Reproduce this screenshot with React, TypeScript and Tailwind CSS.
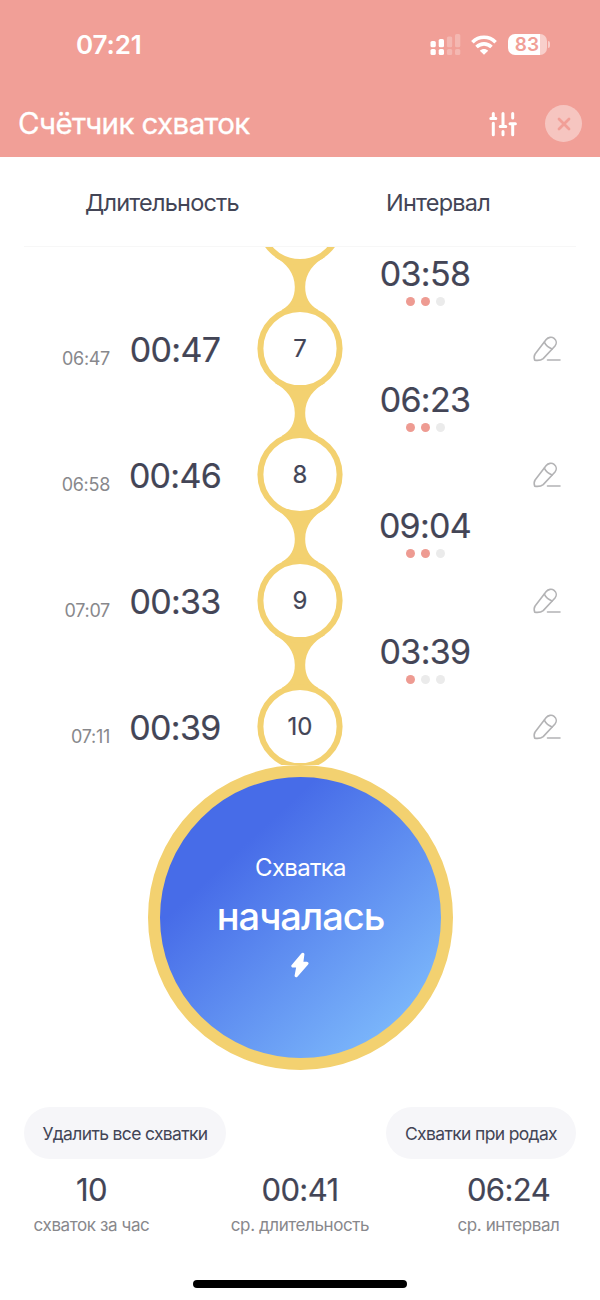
import React from 'react';

interface Contraction {
  number?: number;
  startedAt?: string;
  duration?: string;
  interval?: string;
  intensity?: number;
}

// The first entry is scrolled out of view, only its interval is still visible
const contractions: Contraction[] = [
  { interval: '03:58', intensity: 2 },
  { number: 7, startedAt: '06:47', duration: '00:47', interval: '06:23', intensity: 2 },
  { number: 8, startedAt: '06:58', duration: '00:46', interval: '09:04', intensity: 2 },
  { number: 9, startedAt: '07:07', duration: '00:33', interval: '03:39', intensity: 1 },
  { number: 10, startedAt: '07:11', duration: '00:39' },
];

const SignalIcon = () => (
  <svg width="31" height="22" viewBox="0 0 31 22" fill="#fff">
    <rect x="0.5" y="7" width="5.3" height="6.3" rx="1.6" />
    <rect x="8.7" y="5" width="5.3" height="8.3" rx="1.6" />
    <rect x="0.5" y="15" width="5.3" height="6" rx="1.6" />
    <rect x="8.7" y="15" width="5.3" height="6" rx="1.6" />
    <g opacity="0.25">
      <rect x="16.9" y="2.5" width="5.3" height="10.8" rx="1.6" />
      <rect x="25" y="0" width="5.3" height="13.3" rx="1.6" />
      <rect x="16.9" y="15" width="5.3" height="6" rx="1.6" />
      <rect x="25" y="15" width="5.3" height="6" rx="1.6" />
    </g>
  </svg>
);

const WifiIcon = () => (
  <svg width="26" height="20" viewBox="0 0 26 20" fill="none" stroke="#fff" strokeWidth="3.6">
    <path d="M1.4 7.2C8 0.6 18 0.6 24.6 7.2" />
    <path d="M5.5 12C10 7.8 16 7.8 20.5 12" />
    <path d="M13 19.8L8.8 15.8C11.2 13.4 14.8 13.4 17.2 15.8Z" fill="#fff" stroke="none" />
  </svg>
);

const BatteryIcon = () => (
  <div className="flex items-center gap-px">
    <div className="flex h-[21px] w-[39px] items-center justify-center rounded-[7px] bg-linear-to-r from-white from-82% to-white/50 to-82% text-[19px] leading-none font-semibold text-[#f19f97]">
      <span className="-ml-px">83</span>
    </div>
    <div className="h-[7px] w-[2px] rounded-r-full bg-white/50" />
  </div>
);

const SlidersIcon = () => (
  <svg width="28" height="26" viewBox="0 0 28 26" fill="none" stroke="#fff" strokeWidth="3" strokeLinecap="round">
    <path d="M4.3 2.5V7M1.8 7.6H6.8M4.3 12.2V23.8" />
    <path d="M14 2.5V15M11.2 15.6H16.8M14 20.5V23.8" />
    <path d="M23.7 2.5V7M21 12.8H26.4M23.7 13V23.8" />
  </svg>
);

const PencilIcon = () => (
  <svg width="30" height="28" viewBox="0 0 30 28" fill="none" stroke="#b3b3b5" strokeWidth="1.6" strokeLinecap="round" strokeLinejoin="round">
    <path d="M2.7 25.2C2.1 23.5 2.2 20.4 3.1 19L14.2 4.6C16.2 2.1 19.7 1.5 22.1 3.3C24.6 5.3 24.9 8.6 23 11L11.2 23.6C9.3 25.2 5.7 25.6 2.7 25.2Z" />
    <path d="M12.3 7.2C13.9 10.5 16.3 12.7 20.2 13.9M15.5 25H28" />
  </svg>
);

const BoltIcon = () => (
  <svg width="18" height="26" viewBox="0 0 18 26" fill="#fff" stroke="#fff" strokeWidth="3.2" strokeLinejoin="round">
    <path d="M11.8 2.3L1.9 14H7L5.2 23.7L15.9 11.4H10.6Z" />
  </svg>
);

// Ring with the neck that flows into the ring below it
const TimelineNode: React.FC<{ number?: number; connected: boolean }> = ({ number, connected }) => (
  <svg width="86" height="126" viewBox="0 0 86 126" className="relative overflow-visible">
    {connected && (
      <path
        fill="#f3d170"
        d="M18 77C29 83 37.8 93 37.8 107C37.8 117 34 125 25 129.8L30 136H56L61 129.8C52 125 48.2 117 48.2 107C48.2 93 57 83 68 77Z"
      />
    )}
    <circle cx="43" cy="42.5" r="39.6" fill="#fff" stroke="#f3d170" strokeWidth="6" />
    {number !== undefined && (
      <text x="43" y="51" textAnchor="middle" fontSize="24" fill="#434556" stroke="#434556" strokeWidth="0.2">
        {number}
      </text>
    )}
  </svg>
);

const TimelineRow: React.FC<{ item: Contraction }> = ({ item }) => (
  <div className="grid h-[126px] grid-cols-[257px_86px_257px]">
    <div className="flex h-[86px] items-center">
      {item.startedAt && (
        <span className="mt-[18px] w-[110px] text-right text-[18px] tracking-[-0.3px] text-[#88888c]">{item.startedAt}</span>
      )}
      {item.duration && (
        <span className="ml-[14px] w-[102px] text-center text-[34px] tracking-[-0.7px] [-webkit-text-stroke:0.2px]">
          {item.duration}
        </span>
      )}
    </div>
    <TimelineNode number={item.number} connected={item.interval !== undefined} />
    <div>
      <div className="flex h-[86px] items-center justify-end pr-[38px]">
        <button aria-label="Изменить">
          <PencilIcon />
        </button>
      </div>
      {item.interval && (
        <div className="flex w-[164px] flex-col items-center">
          <span className="-mt-[10px] text-[34px] leading-[36px] tracking-[-0.7px] [-webkit-text-stroke:0.2px]">
            {item.interval}
          </span>
          <div className="mt-[5px] flex gap-[6px]">
            {[1, 2, 3].map((level) => (
              <span
                key={level}
                className={`size-[9px] rounded-full ${level <= (item.intensity ?? 0) ? 'bg-[#ee9b92]' : 'bg-[#ebebeb]'}`}
              />
            ))}
          </div>
        </div>
      )}
    </div>
  </div>
);

const Stat: React.FC<{ value: string; label: string; className: string }> = ({ value, label, className }) => (
  <div className={`flex flex-col items-center ${className}`}>
    <span className="text-[31px] leading-[36px] tracking-[-0.6px] [-webkit-text-stroke:0.2px]">{value}</span>
    <span className="mt-[5px] text-[17px] leading-[25px] tracking-[-0.4px] whitespace-nowrap text-[#88888c]">{label}</span>
  </div>
);

const App: React.FC = () => {
  return (
    <div className="flex h-[1300px] w-[600px] flex-col overflow-hidden bg-white font-['Inter','Liberation_Sans',sans-serif] text-[#434556]">
      <header className="h-[157px] shrink-0 bg-[#f19f97] text-white">
        <div className="flex h-[89px] items-center justify-between pr-[50px] pl-[76px]">
          <span className="text-[26px] font-semibold tracking-[-0.1px]">07:21</span>
          <div className="flex items-center">
            <SignalIcon />
            <span className="mr-[11px] ml-[10px]">
              <WifiIcon />
            </span>
            <BatteryIcon />
          </div>
        </div>
        <div className="flex h-[69px] items-center pr-[18px] pl-[18px]">
          <h1 className="text-[29.5px] tracking-[-0.6px] [-webkit-text-stroke:0.3px]">Счётчик схваток</h1>
          <button className="ml-auto" aria-label="Настройки">
            <SlidersIcon />
          </button>
          <button className="ml-[28px] flex size-[37px] items-center justify-center rounded-full bg-white/40" aria-label="Закрыть">
            <svg width="14" height="14" viewBox="0 0 14 14" stroke="#f19f97" strokeWidth="2.8" strokeLinecap="round">
              <path d="M2 2L12 12M12 2L2 12" />
            </svg>
          </button>
        </div>
      </header>

      <div className="mx-[24px] grid h-[90px] shrink-0 grid-cols-2 items-center border-b border-[#f7f7f7] pt-[3px] text-center text-[23.5px] tracking-[-0.8px]">
        <span>Длительность</span>
        <span>Интервал</span>
      </div>

      <div className="h-[518px] shrink-0 overflow-hidden">
        <div className="-mt-[67px]">
          {contractions.map((item, index) => (
            <TimelineRow key={index} item={item} />
          ))}
        </div>
      </div>

      <button className="ml-[148px] flex size-[305px] shrink-0 flex-col items-center rounded-full border-12 border-[#f3d170] bg-linear-[137deg] from-[#476ce8] from-27% to-[#7cb8fb] to-88% pt-[74px] text-white">
        <span className="text-[24px] leading-[34px] tracking-[-0.7px]">Схватка</span>
        <span className="mt-[7px] text-[38px] leading-[48px] font-medium tracking-[-1px]">началась</span>
        <span className="mt-[12px] -ml-px">
          <BoltIcon />
        </span>
      </button>

      <div className="mt-[37px] flex shrink-0 justify-between px-[24px] text-[17.5px] tracking-[-0.65px]">
        <button className="h-[52px] w-[202px] rounded-full bg-[#f6f6f9] pt-[2px] whitespace-nowrap">Удалить все схватки</button>
        <button className="h-[52px] w-[190px] rounded-full bg-[#f6f6f9] pt-[2px] whitespace-nowrap">Схватки при родах</button>
      </div>

      <div className="mt-[13px] flex shrink-0 justify-between px-[24px]">
        <Stat value="10" label="схваток за час" className="w-[135px]" />
        <Stat value="00:41" label="ср. длительность" className="w-[150px]" />
        <Stat value="06:24" label="ср. интервал" className="w-[135px]" />
      </div>

      <div className="mx-auto mt-auto mb-[12px] h-[8px] w-[214px] shrink-0 rounded-full bg-black" />
    </div>
  );
};

export default App;
